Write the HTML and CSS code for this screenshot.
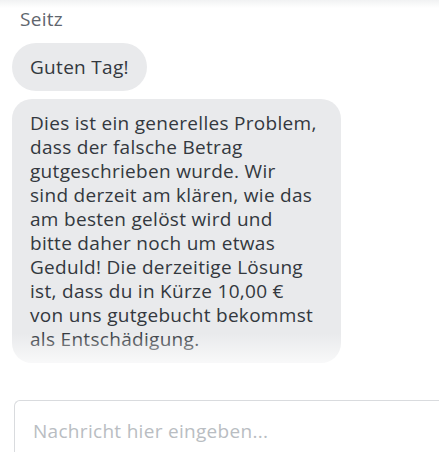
FILE: index.html
```html
<!DOCTYPE html>
<html>
<head>
	<meta charset="UTF-8" />
	<title>Chat</title>
	<link rel="stylesheet" href="styles.css">
</head>
<body>
	<div class="chat">
		<!--message list-->
		<div class="messages">
			<div class="sender">Seitz</div>
			<div class="bubble">Guten Tag!</div>
			<div class="bubble">Dies ist ein generelles Problem,<br>dass der falsche Betrag<br>gutgeschrieben wurde. Wir<br>sind derzeit am klären, wie das<br>am besten gelöst wird und<br>bitte daher noch um etwas<br>Geduld! Die derzeitige Lösung<br>ist, dass du in Kürze 10,00 €<br>von uns gutgebucht bekommst<br>als Entschädigung.</div>
		</div>
		<!--input-->
		<form class="composer" onsubmit="return false;">
			<input type="text" class="field" placeholder="Nachricht hier eingeben..." />
		</form>
	</div>
</body>
</html>
```

FILE: styles.css
```css
html, body {
	margin: 0;
	background: #fff;
	overflow: hidden;
}
body {
	font-family: "Open Sans", "Noto Sans", sans-serif;
	font-size: 19px;
	letter-spacing: 0.3px;
	color: #33383e;
}
.chat {
	display: flex;
	flex-direction: column;
	height: 452px;
}
.messages {
	position: relative;
	display: flex;
	flex-direction: column;
	align-items: flex-start;
	gap: 8px;
	padding: 7px 0 0 12px;
}
/*scroll shadows over the list*/
.messages::before {
	content: "";
	position: absolute;
	left: 0;
	right: 0;
	top: 0;
	height: 8px;
	background: linear-gradient(#f1f2f3, rgba(255,255,255,0));
}
.messages::after {
	content: "";
	position: absolute;
	left: 0;
	right: 0;
	bottom: 0;
	height: 30px;
	background: linear-gradient(rgba(255,255,255,0), rgba(255,255,255,0.7));
}
.sender {
	color: #5f666e;
	margin-left: 8px;
	line-height: 24px;
	margin-bottom: 4px;
}
.bubble {
	background: #e9eaec;
	border-radius: 24px;
	padding: 12px 18px;
	line-height: 24px;
	box-sizing: border-box;
	white-space: nowrap;
}
.bubble + .bubble {
	border-radius: 20px;
	width: 329px;
}
.composer {
	margin: 37px 0 0 14px;
}
.field {
	display: block;
	width: 100%;
	box-sizing: border-box;
	height: 70px;
	border: 1px solid #d9dbde;
	border-right: none;
	border-radius: 6px 0 0 0;
	padding: 0 18px 8px;
	font-family: "Open Sans", "Noto Sans", sans-serif;
	font-size: 19px;
	letter-spacing: 0.3px;
	color: #33383e;
	outline: none;
}
.field::placeholder {
	color: #b9bdc2;
}
```
